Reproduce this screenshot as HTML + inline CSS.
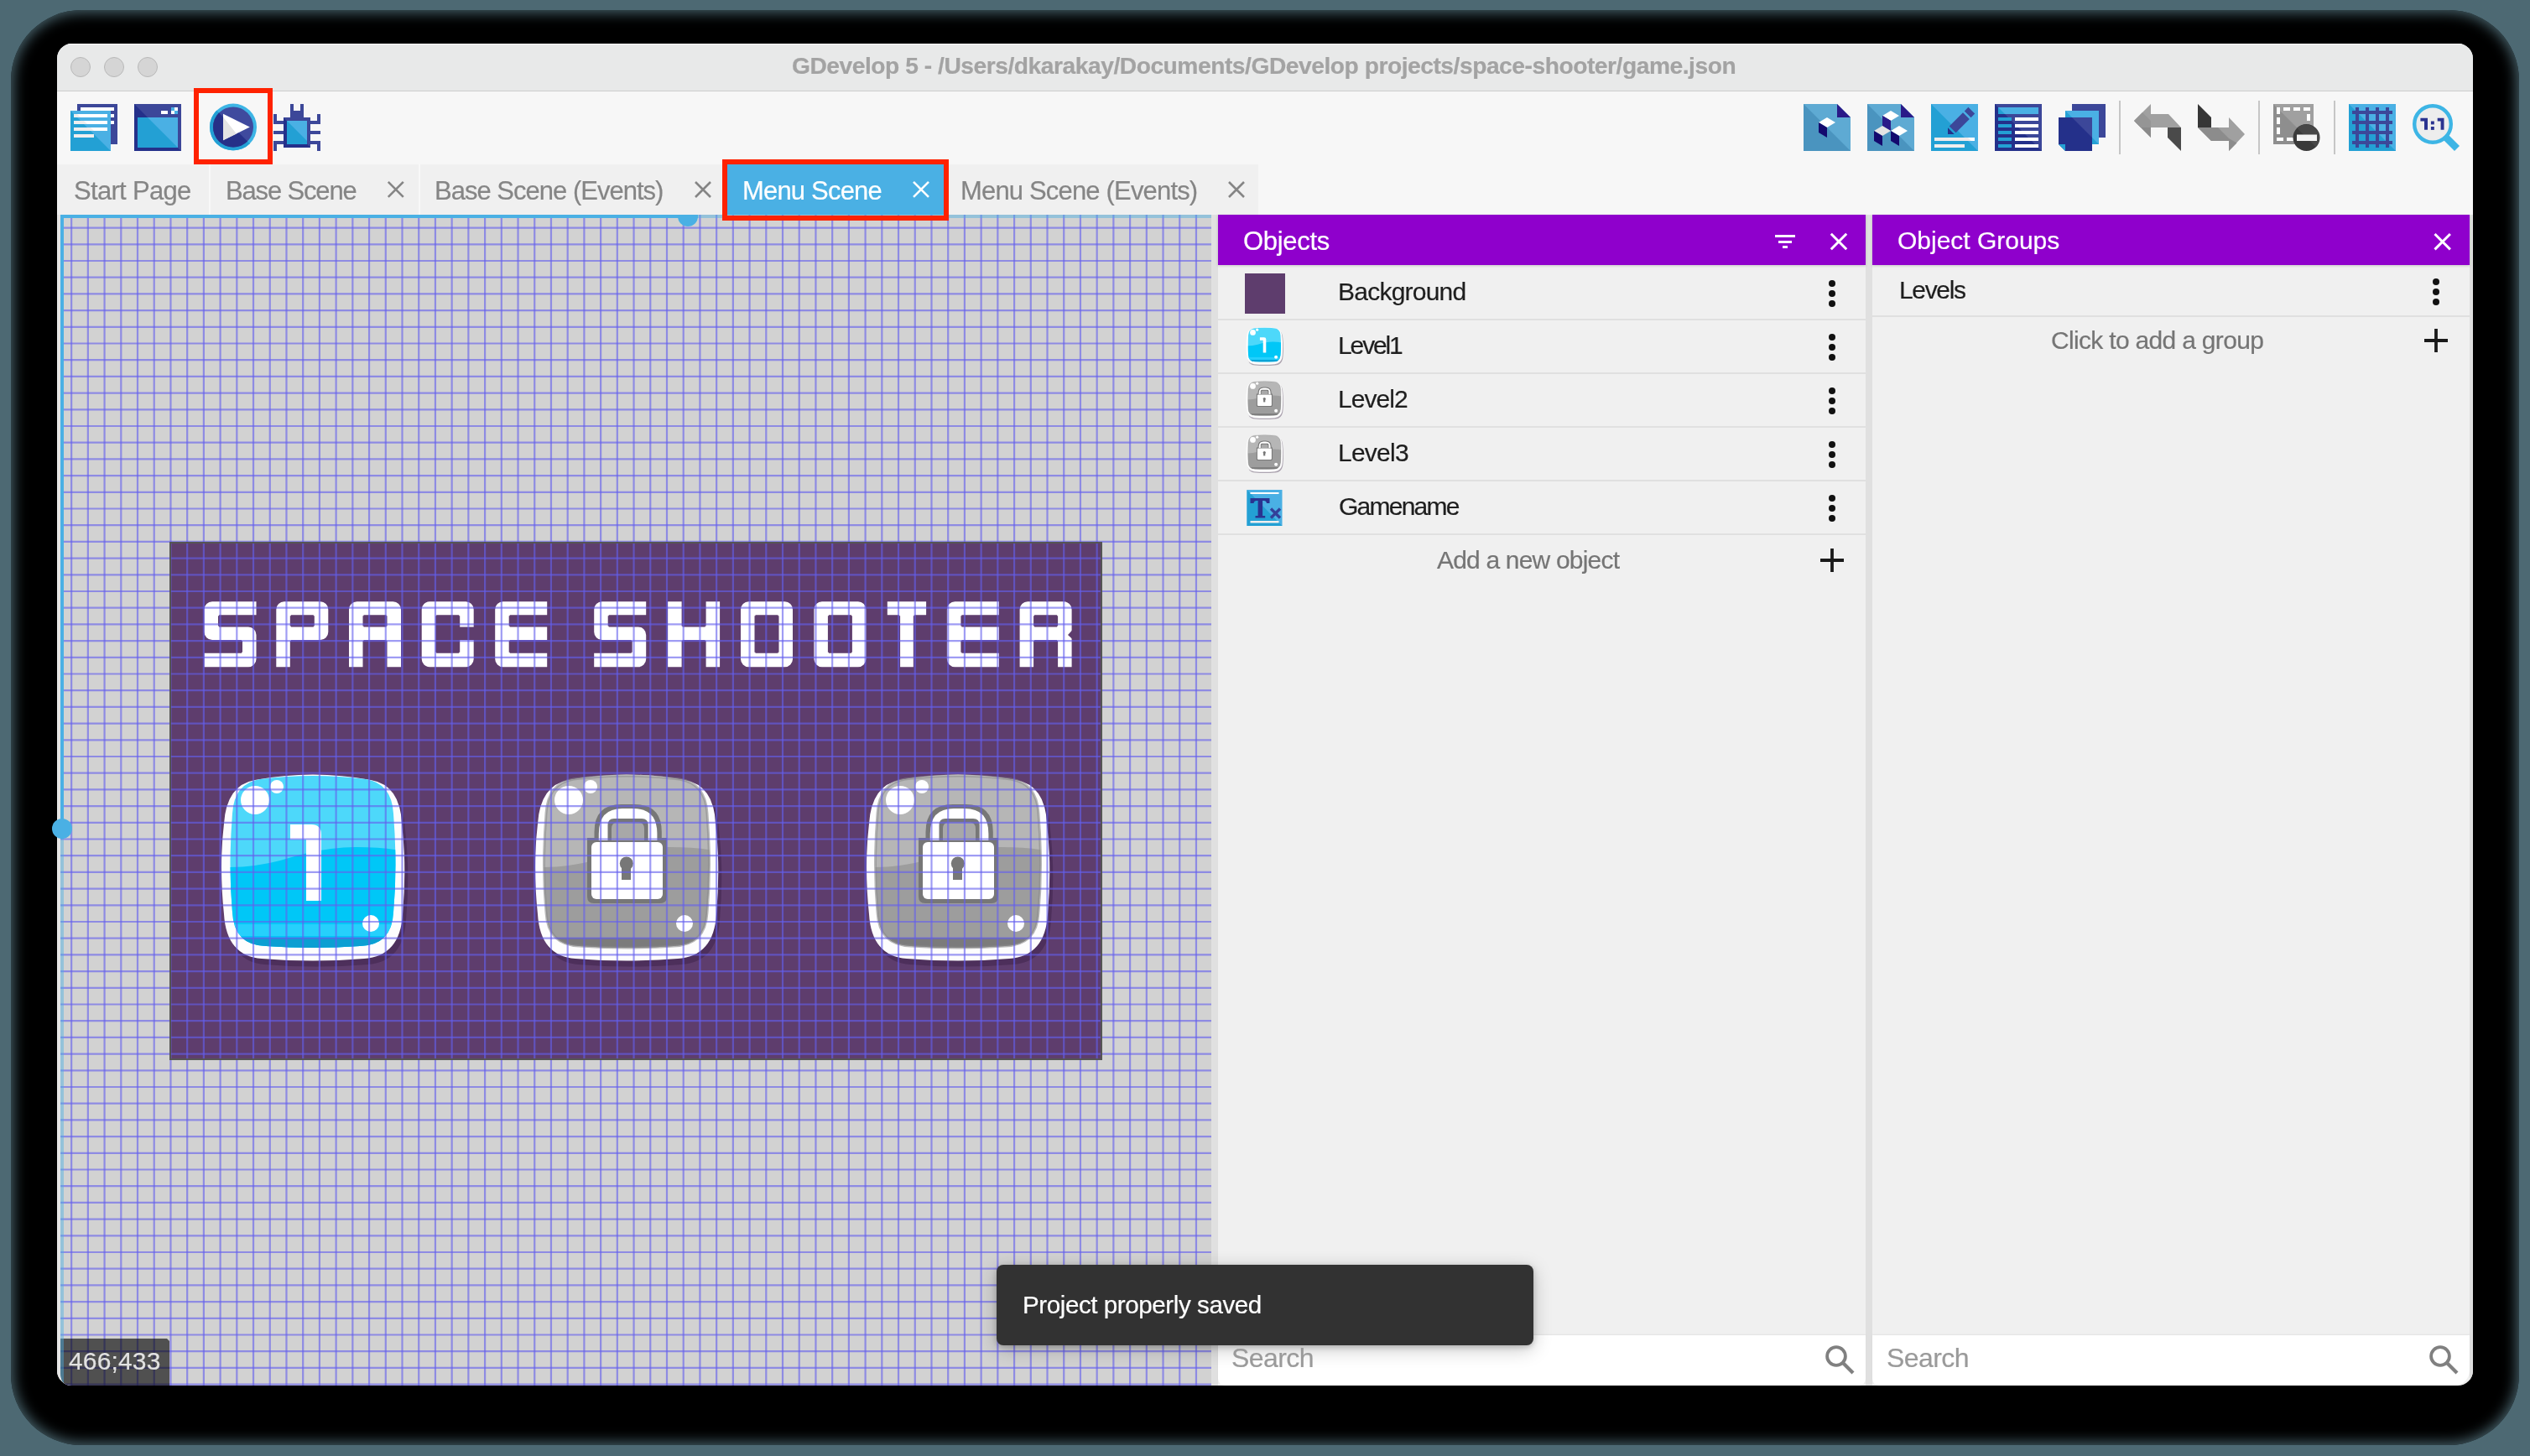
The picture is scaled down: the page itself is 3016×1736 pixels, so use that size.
<!DOCTYPE html>
<html><head><meta charset="utf-8">
<style>
*{box-sizing:border-box;margin:0;padding:0}
html,body{width:3016px;height:1736px;overflow:hidden;background:#4d6973;font-family:"Liberation Sans",sans-serif}
.a{position:absolute}
.t{position:absolute;white-space:pre;line-height:1;-webkit-font-smoothing:antialiased;will-change:transform}
svg{position:absolute;overflow:visible}
</style></head><body>
<div class="a" style="left:13px;top:12px;width:2990px;height:1711px;border-radius:84px;background:#000;box-shadow:inset 0 0 16px 3px rgba(77,105,115,0.95)"></div>
<div class="a" style="left:68px;top:52px;width:2880px;height:1600px;border-radius:18px;overflow:hidden;background:#f0f0f0">
<div class="a" style="left:0px;top:0px;width:2880px;height:56px;background:#e8e9e9;border-top:1px solid #fafafa"></div>
<div class="a" style="left:0px;top:56px;width:2880px;height:1px;background:#cdcdcd;"></div>
<div class="a" style="left:16px;top:16px;width:24px;height:24px;border-radius:50%;background:#d5d5d5;border:1px solid #b8b8b8"></div>
<div class="a" style="left:56px;top:16px;width:24px;height:24px;border-radius:50%;background:#d5d5d5;border:1px solid #b8b8b8"></div>
<div class="a" style="left:96px;top:16px;width:24px;height:24px;border-radius:50%;background:#d5d5d5;border:1px solid #b8b8b8"></div>
<div class="a" style="left:0px;top:57px;width:2880px;height:87px;background:#f7f7f7;"></div>
<div class="a" style="left:0px;top:144px;width:1432px;height:60px;background:#f0f0f0;"></div>
<div class="a" style="left:1432px;top:144px;width:1448px;height:60px;background:#f7f7f7;"></div>
<div class="a" style="left:181px;top:144px;width:2px;height:60px;background:#f8f8f8;"></div>
<div class="a" style="left:431px;top:144px;width:2px;height:60px;background:#f8f8f8;"></div>
<div class="a" style="left:0px;top:204px;width:4px;height:1396px;background:#e6e6e6;"></div>
<div class="a" style="left:1376px;top:204px;width:8px;height:1396px;background:#e0e0e0;"></div>
<div class="a" style="left:2156px;top:204px;width:8px;height:1396px;background:#e0e0e0;"></div>
<div class="a" style="left:2876px;top:204px;width:4px;height:1396px;background:#dedede;"></div>
<div class="a" style="left:799px;top:144px;width:264px;height:60px;background:#4ab0e4;"></div>
</div>
<svg class="a" style="left:0;top:0" width="3016" height="1736" viewBox="0 0 3016 1736">
<defs><clipPath id="cpCanvas"><path d="M72 256H1444V1652H86Q72 1652 72 1638Z"/></clipPath>
<clipPath id="cpIn"><path d="M46 7Q109 -1 172 7Q203 12 205 48Q210 111 205 166Q203 205 165 206Q109 210 53 206Q15 205 13 166Q8 111 13 48Q15 12 46 7Z"/></clipPath>
<g id="btnBase">
  <path d="M40 8Q109 -5 178 8Q213 14 215 60Q221 111 216 168Q213 218 170 221Q109 226 48 221Q6 218 3 168Q-3 111 3 60Q6 14 40 8Z" transform="translate(4 7)" fill="#2e1838" opacity="0.35"/>
  <path d="M40 8Q109 -5 178 8Q213 14 215 60Q221 111 216 168Q213 218 170 221Q109 226 48 221Q6 218 3 168Q-3 111 3 60Q6 14 40 8Z" fill="#fdfdfd"/>
</g>
<g id="btnBlue">
  <use href="#btnBase"/>
  <g clip-path="url(#cpIn)">
    <rect x="0" y="0" width="218" height="223" fill="#4dd8fa"/>
    <path d="M8 112Q40 112 70 104Q120 88 160 88Q190 88 212 92V215H8Z" fill="#00c7f7"/>
    <rect x="0" y="180" width="218" height="14" fill="#3fd6ff" opacity="0.6"/>
    <rect x="0" y="196" width="218" height="14" fill="#0b9fd2"/>
  </g>
  <path d="M82 61H107Q119 61 119 73V152H101V79H82Z" fill="#fff"/>
  <circle cx="40" cy="32" r="17" fill="#fff"/>
  <circle cx="66" cy="16" r="8" fill="#fff"/>
  <circle cx="178" cy="179" r="10" fill="#fff"/>
</g>
<g id="btnGray">
  <use href="#btnBase"/>
  <g clip-path="url(#cpIn)">
    <rect x="0" y="0" width="218" height="223" fill="#b6b6b6"/>
    <path d="M8 112Q40 112 70 104Q120 88 160 88Q190 88 212 92V215H8Z" fill="#9d9d9d"/>
    <rect x="0" y="196" width="218" height="14" fill="#7b7b7b"/>
  </g>
  <path d="M46 7Q109 -1 172 7Q203 12 205 48Q210 111 205 166Q203 205 165 206Q109 210 53 206Q15 205 13 166Q8 111 13 48Q15 12 46 7Z" fill="none" stroke="#8a8a8a" stroke-width="3" opacity="0.6"/>
  <path d="M70.5 155V70Q70.5 37 103 37H118Q150.8 37 150.8 70V77H157V147Q157 155 149 155H70Q62 155 62 147V77H70.5Z" fill="#777"/>
  <path d="M75.8 80V72Q75.8 42 104 42H117Q145.4 42 145.4 72V80Z" fill="#fff"/>
  <path d="M86.5 80V62Q86.5 54 94 54H127Q134.7 54 134.7 62V80Z" fill="#777"/>
  <path d="M91 80V66Q91 58.4 98 58.4H123Q130 58.4 130 66V80Z" fill="#a8a8a8"/>
  <rect x="67" y="82" width="85" height="68" rx="6" fill="#fff"/>
  <circle cx="108.8" cy="107.5" r="8" fill="#777"/>
  <rect x="103" y="108" width="11" height="19" fill="#777"/>
  <circle cx="40" cy="32" r="17" fill="#fff"/>
  <circle cx="66" cy="16" r="8" fill="#fff"/>
  <circle cx="178" cy="179" r="10" fill="#fff"/>
</g>
</defs>
<g clip-path="url(#cpCanvas)">
<rect x="72" y="256" width="1372" height="1396" fill="#d2d2d2"/>
<rect x="202" y="646" width="1112" height="618" fill="#5e3d6d"/>
<path d="M253.00 717.30H261.00V734.30H243.50V726.80A9.5 9.5 0 0 1 253.00 717.30ZM259.00 717.30H290.00V733.30H259.00V717.30ZM288.00 717.30H305.50V733.30H288.00V717.30ZM243.50 732.30H260.00V748.50H243.50V732.30ZM243.50 746.50H261.00V763.10H253.00A9.5 9.5 0 0 1 243.50 753.60V746.50ZM259.00 747.50H290.00V763.10H259.00V747.50ZM288.00 747.50H296.00A9.5 9.5 0 0 1 305.50 757.00V764.10H288.00V747.50ZM289.00 762.10H305.50V779.80H289.00V762.10ZM243.50 778.80H261.00V795.30H243.50V778.80ZM259.00 778.80H290.00V795.30H259.00V778.80ZM288.00 777.80H305.50V785.80A9.5 9.5 0 0 1 296.00 795.30H288.00V777.80ZM338.80 717.30H346.80V734.30H329.30V726.80A9.5 9.5 0 0 1 338.80 717.30ZM344.80 717.30H375.80V733.30H344.80V717.30ZM373.80 717.30H381.80A9.5 9.5 0 0 1 391.30 726.80V734.30H373.80V717.30ZM329.30 732.30H345.80V748.50H329.30V732.30ZM374.80 732.30H391.30V748.50H374.80V732.30ZM329.30 746.50H346.80V764.10H329.30V746.50ZM344.80 747.50H375.80V763.10H344.80V747.50ZM373.80 746.50H391.30V753.60A9.5 9.5 0 0 1 381.80 763.10H373.80V746.50ZM329.30 762.10H345.80V779.80H329.30V762.10ZM329.30 777.80H345.80V795.30H329.30V777.80ZM425.50 717.30H433.50V734.30H416.00V726.80A9.5 9.5 0 0 1 425.50 717.30ZM431.50 717.30H462.50V733.30H431.50V717.30ZM460.50 717.30H468.50A9.5 9.5 0 0 1 478.00 726.80V734.30H460.50V717.30ZM416.00 732.30H432.50V748.50H416.00V732.30ZM461.50 732.30H478.00V748.50H461.50V732.30ZM416.00 746.50H433.50V764.10H416.00V746.50ZM431.50 747.50H462.50V763.10H431.50V747.50ZM460.50 746.50H478.00V764.10H460.50V746.50ZM416.00 762.10H432.50V779.80H416.00V762.10ZM461.50 762.10H478.00V779.80H461.50V762.10ZM416.00 777.80H432.50V795.30H416.00V777.80ZM461.50 777.80H478.00V795.30H461.50V777.80ZM512.20 717.30H520.20V734.30H502.70V726.80A9.5 9.5 0 0 1 512.20 717.30ZM518.20 717.30H549.20V733.30H518.20V717.30ZM547.20 717.30H555.20A9.5 9.5 0 0 1 564.70 726.80V734.30H547.20V717.30ZM502.70 732.30H519.20V748.50H502.70V732.30ZM548.20 732.30H564.70V747.50H548.20V732.30ZM502.70 746.50H519.20V764.10H502.70V746.50ZM502.70 762.10H519.20V779.80H502.70V762.10ZM548.20 763.10H564.70V779.80H548.20V763.10ZM502.70 777.80H520.20V795.30H512.20A9.5 9.5 0 0 1 502.70 785.80V777.80ZM518.20 778.80H549.20V795.30H518.20V778.80ZM547.20 777.80H564.70V785.80A9.5 9.5 0 0 1 555.20 795.30H547.20V777.80ZM599.70 717.30H607.70V734.30H590.20V726.80A9.5 9.5 0 0 1 599.70 717.30ZM605.70 717.30H636.70V733.30H605.70V717.30ZM634.70 717.30H652.20V733.30H634.70V717.30ZM590.20 732.30H606.70V748.50H590.20V732.30ZM590.20 746.50H607.70V764.10H590.20V746.50ZM605.70 747.50H636.70V763.10H605.70V747.50ZM634.70 747.50H652.20V763.10H634.70V747.50ZM590.20 762.10H606.70V779.80H590.20V762.10ZM590.20 777.80H607.70V795.30H599.70A9.5 9.5 0 0 1 590.20 785.80V777.80ZM605.70 778.80H636.70V795.30H605.70V778.80ZM634.70 778.80H652.20V795.30H634.70V778.80ZM717.70 717.30H725.70V734.30H708.20V726.80A9.5 9.5 0 0 1 717.70 717.30ZM723.70 717.30H754.70V733.30H723.70V717.30ZM752.70 717.30H770.20V733.30H752.70V717.30ZM708.20 732.30H724.70V748.50H708.20V732.30ZM708.20 746.50H725.70V763.10H717.70A9.5 9.5 0 0 1 708.20 753.60V746.50ZM723.70 747.50H754.70V763.10H723.70V747.50ZM752.70 747.50H760.70A9.5 9.5 0 0 1 770.20 757.00V764.10H752.70V747.50ZM753.70 762.10H770.20V779.80H753.70V762.10ZM708.20 778.80H725.70V795.30H708.20V778.80ZM723.70 778.80H754.70V795.30H723.70V778.80ZM752.70 777.80H770.20V785.80A9.5 9.5 0 0 1 760.70 795.30H752.70V777.80ZM796.10 717.30H812.60V734.30H796.10V717.30ZM841.60 717.30H858.10V734.30H841.60V717.30ZM796.10 732.30H812.60V748.50H796.10V732.30ZM841.60 732.30H858.10V748.50H841.60V732.30ZM796.10 746.50H813.60V764.10H796.10V746.50ZM811.60 747.50H842.60V763.10H811.60V747.50ZM840.60 746.50H858.10V764.10H840.60V746.50ZM796.10 762.10H812.60V779.80H796.10V762.10ZM841.60 762.10H858.10V779.80H841.60V762.10ZM796.10 777.80H812.60V795.30H796.10V777.80ZM841.60 777.80H858.10V795.30H841.60V777.80ZM892.50 717.30H900.50V734.30H883.00V726.80A9.5 9.5 0 0 1 892.50 717.30ZM898.50 717.30H929.50V733.30H898.50V717.30ZM927.50 717.30H935.50A9.5 9.5 0 0 1 945.00 726.80V734.30H927.50V717.30ZM883.00 732.30H899.50V748.50H883.00V732.30ZM928.50 732.30H945.00V748.50H928.50V732.30ZM883.00 746.50H899.50V764.10H883.00V746.50ZM928.50 746.50H945.00V764.10H928.50V746.50ZM883.00 762.10H899.50V779.80H883.00V762.10ZM928.50 762.10H945.00V779.80H928.50V762.10ZM883.00 777.80H900.50V795.30H892.50A9.5 9.5 0 0 1 883.00 785.80V777.80ZM898.50 778.80H929.50V795.30H898.50V778.80ZM927.50 777.80H945.00V785.80A9.5 9.5 0 0 1 935.50 795.30H927.50V777.80ZM979.90 717.30H987.90V734.30H970.40V726.80A9.5 9.5 0 0 1 979.90 717.30ZM985.90 717.30H1016.90V733.30H985.90V717.30ZM1014.90 717.30H1022.90A9.5 9.5 0 0 1 1032.40 726.80V734.30H1014.90V717.30ZM970.40 732.30H986.90V748.50H970.40V732.30ZM1015.90 732.30H1032.40V748.50H1015.90V732.30ZM970.40 746.50H986.90V764.10H970.40V746.50ZM1015.90 746.50H1032.40V764.10H1015.90V746.50ZM970.40 762.10H986.90V779.80H970.40V762.10ZM1015.90 762.10H1032.40V779.80H1015.90V762.10ZM970.40 777.80H987.90V795.30H979.90A9.5 9.5 0 0 1 970.40 785.80V777.80ZM985.90 778.80H1016.90V795.30H985.90V778.80ZM1014.90 777.80H1032.40V785.80A9.5 9.5 0 0 1 1022.90 795.30H1014.90V777.80ZM1138.40 717.30H1146.40V734.30H1128.90V726.80A9.5 9.5 0 0 1 1138.40 717.30ZM1144.40 717.30H1175.40V733.30H1144.40V717.30ZM1173.40 717.30H1190.90V733.30H1173.40V717.30ZM1128.90 732.30H1145.40V748.50H1128.90V732.30ZM1128.90 746.50H1146.40V764.10H1128.90V746.50ZM1144.40 747.50H1175.40V763.10H1144.40V747.50ZM1173.40 747.50H1190.90V763.10H1173.40V747.50ZM1128.90 762.10H1145.40V779.80H1128.90V762.10ZM1128.90 777.80H1146.40V795.30H1138.40A9.5 9.5 0 0 1 1128.90 785.80V777.80ZM1144.40 778.80H1175.40V795.30H1144.40V778.80ZM1173.40 778.80H1190.90V795.30H1173.40V778.80ZM1225.10 717.30H1233.10V734.30H1215.60V726.80A9.5 9.5 0 0 1 1225.10 717.30ZM1231.10 717.30H1262.10V733.30H1231.10V717.30ZM1260.10 717.30H1268.10A9.5 9.5 0 0 1 1277.60 726.80V734.30H1260.10V717.30ZM1215.60 732.30H1232.10V748.50H1215.60V732.30ZM1261.10 732.30H1277.60V748.50H1261.10V732.30ZM1215.60 746.50H1233.10V764.10H1215.60V746.50ZM1231.10 747.50H1262.10V763.10H1231.10V747.50ZM1260.10 746.50H1277.60V764.10H1260.10V746.50ZM1215.60 762.10H1232.10V779.80H1215.60V762.10ZM1261.10 762.10H1277.60V779.80H1261.10V762.10ZM1215.60 777.80H1232.10V795.30H1215.60V777.80ZM1261.10 777.80H1277.60V795.30H1261.10V777.80ZM1057.80 717.30H1074.10V733.30H1057.80V717.30ZM1072.10 717.30H1089.80V734.30H1072.10V717.30ZM1087.80 717.30H1104.10V733.30H1087.80V717.30ZM1073.10 732.30H1088.80V748.50H1073.10V732.30ZM1073.10 746.50H1088.80V764.10H1073.10V746.50ZM1073.10 762.10H1088.80V779.80H1073.10V762.10ZM1073.10 777.80H1088.80V795.30H1073.10V777.80Z" fill="#fff"/>
<path d="M1279.5 750L1273 757L1279.5 763Z" fill="#5e3d6d"/>
<use href="#btnBlue" transform="translate(264 922)"/>
<use href="#btnGray" transform="translate(638 922)"/>
<use href="#btnGray" transform="translate(1033 922)"/>
<path d="M84.04 256h2.2v1396h-2.2zM103.76 256h2.2v1396h-2.2zM123.48 256h2.2v1396h-2.2zM143.19 256h2.2v1396h-2.2zM162.91 256h2.2v1396h-2.2zM182.63 256h2.2v1396h-2.2zM202.35 256h2.2v1396h-2.2zM222.07 256h2.2v1396h-2.2zM241.78 256h2.2v1396h-2.2zM261.50 256h2.2v1396h-2.2zM281.22 256h2.2v1396h-2.2zM300.94 256h2.2v1396h-2.2zM320.66 256h2.2v1396h-2.2zM340.37 256h2.2v1396h-2.2zM360.09 256h2.2v1396h-2.2zM379.81 256h2.2v1396h-2.2zM399.53 256h2.2v1396h-2.2zM419.25 256h2.2v1396h-2.2zM438.96 256h2.2v1396h-2.2zM458.68 256h2.2v1396h-2.2zM478.40 256h2.2v1396h-2.2zM498.12 256h2.2v1396h-2.2zM517.84 256h2.2v1396h-2.2zM537.55 256h2.2v1396h-2.2zM557.27 256h2.2v1396h-2.2zM576.99 256h2.2v1396h-2.2zM596.71 256h2.2v1396h-2.2zM616.43 256h2.2v1396h-2.2zM636.14 256h2.2v1396h-2.2zM655.86 256h2.2v1396h-2.2zM675.58 256h2.2v1396h-2.2zM695.30 256h2.2v1396h-2.2zM715.02 256h2.2v1396h-2.2zM734.73 256h2.2v1396h-2.2zM754.45 256h2.2v1396h-2.2zM774.17 256h2.2v1396h-2.2zM793.89 256h2.2v1396h-2.2zM813.61 256h2.2v1396h-2.2zM833.32 256h2.2v1396h-2.2zM853.04 256h2.2v1396h-2.2zM872.76 256h2.2v1396h-2.2zM892.48 256h2.2v1396h-2.2zM912.20 256h2.2v1396h-2.2zM931.91 256h2.2v1396h-2.2zM951.63 256h2.2v1396h-2.2zM971.35 256h2.2v1396h-2.2zM991.07 256h2.2v1396h-2.2zM1010.79 256h2.2v1396h-2.2zM1030.50 256h2.2v1396h-2.2zM1050.22 256h2.2v1396h-2.2zM1069.94 256h2.2v1396h-2.2zM1089.66 256h2.2v1396h-2.2zM1109.38 256h2.2v1396h-2.2zM1129.09 256h2.2v1396h-2.2zM1148.81 256h2.2v1396h-2.2zM1168.53 256h2.2v1396h-2.2zM1188.25 256h2.2v1396h-2.2zM1207.97 256h2.2v1396h-2.2zM1227.68 256h2.2v1396h-2.2zM1247.40 256h2.2v1396h-2.2zM1267.12 256h2.2v1396h-2.2zM1286.84 256h2.2v1396h-2.2zM1306.56 256h2.2v1396h-2.2zM1326.27 256h2.2v1396h-2.2zM1345.99 256h2.2v1396h-2.2zM1365.71 256h2.2v1396h-2.2zM1385.43 256h2.2v1396h-2.2zM1405.15 256h2.2v1396h-2.2zM1424.86 256h2.2v1396h-2.2z" fill="rgb(100,96,238)" fill-opacity="0.62"/>
<path d="M72 270.48h1372v2.2h-1372zM72 290.18h1372v2.2h-1372zM72 309.88h1372v2.2h-1372zM72 329.58h1372v2.2h-1372zM72 349.28h1372v2.2h-1372zM72 368.98h1372v2.2h-1372zM72 388.68h1372v2.2h-1372zM72 408.38h1372v2.2h-1372zM72 428.08h1372v2.2h-1372zM72 447.78h1372v2.2h-1372zM72 467.48h1372v2.2h-1372zM72 487.18h1372v2.2h-1372zM72 506.88h1372v2.2h-1372zM72 526.58h1372v2.2h-1372zM72 546.28h1372v2.2h-1372zM72 565.98h1372v2.2h-1372zM72 585.68h1372v2.2h-1372zM72 605.38h1372v2.2h-1372zM72 625.08h1372v2.2h-1372zM72 644.78h1372v2.2h-1372zM72 664.48h1372v2.2h-1372zM72 684.18h1372v2.2h-1372zM72 703.88h1372v2.2h-1372zM72 723.58h1372v2.2h-1372zM72 743.28h1372v2.2h-1372zM72 762.98h1372v2.2h-1372zM72 782.68h1372v2.2h-1372zM72 802.38h1372v2.2h-1372zM72 822.08h1372v2.2h-1372zM72 841.78h1372v2.2h-1372zM72 861.48h1372v2.2h-1372zM72 881.18h1372v2.2h-1372zM72 900.88h1372v2.2h-1372zM72 920.58h1372v2.2h-1372zM72 940.28h1372v2.2h-1372zM72 959.98h1372v2.2h-1372zM72 979.68h1372v2.2h-1372zM72 999.38h1372v2.2h-1372zM72 1019.08h1372v2.2h-1372zM72 1038.78h1372v2.2h-1372zM72 1058.48h1372v2.2h-1372zM72 1078.18h1372v2.2h-1372zM72 1097.88h1372v2.2h-1372zM72 1117.58h1372v2.2h-1372zM72 1137.28h1372v2.2h-1372zM72 1156.98h1372v2.2h-1372zM72 1176.68h1372v2.2h-1372zM72 1196.38h1372v2.2h-1372zM72 1216.08h1372v2.2h-1372zM72 1235.78h1372v2.2h-1372zM72 1255.48h1372v2.2h-1372zM72 1275.18h1372v2.2h-1372zM72 1294.88h1372v2.2h-1372zM72 1314.58h1372v2.2h-1372zM72 1334.28h1372v2.2h-1372zM72 1353.98h1372v2.2h-1372zM72 1373.68h1372v2.2h-1372zM72 1393.38h1372v2.2h-1372zM72 1413.08h1372v2.2h-1372zM72 1432.78h1372v2.2h-1372zM72 1452.48h1372v2.2h-1372zM72 1472.18h1372v2.2h-1372zM72 1491.88h1372v2.2h-1372zM72 1511.58h1372v2.2h-1372zM72 1531.28h1372v2.2h-1372zM72 1550.98h1372v2.2h-1372zM72 1570.68h1372v2.2h-1372zM72 1590.38h1372v2.2h-1372zM72 1610.08h1372v2.2h-1372zM72 1629.78h1372v2.2h-1372zM72 1649.48h1372v2.2h-1372z" fill="rgb(100,96,238)" fill-opacity="0.62"/>
<rect x="203" y="647" width="1110" height="616" fill="none" stroke="#555" stroke-width="2"/>
<path d="M72 1596H199L202 1599V1652H86Q72 1652 72 1638Z" fill="#000" fill-opacity="0.62"/>
<rect x="72" y="256" width="1372" height="4" fill="#4ab0e4" fill-opacity="0.45"/>
<rect x="72" y="256" width="4" height="1396" fill="#4ab0e4" fill-opacity="0.45"/>
<rect x="72" y="256" width="760" height="4" fill="#4ab0e4"/>
<rect x="72" y="256" width="4" height="744" fill="#4ab0e4"/>
<circle cx="820" cy="258" r="12" fill="#4ab0e4"/>
</g>
<circle cx="74" cy="988" r="12" fill="#4ab0e4"/>
</svg>
<div class="a" style="left:1452px;top:256px;width:772px;height:60px;background:#8f00cc;box-shadow:0 1px 3px rgba(0,0,0,0.18)"></div>
<div class="a" style="left:2232px;top:256px;width:712px;height:60px;background:#8f00cc;box-shadow:0 1px 3px rgba(0,0,0,0.18)"></div>
<div class="a" style="left:1452px;top:380px;width:772px;height:2px;background:#e0e0e0;"></div>
<div class="a" style="left:1452px;top:444px;width:772px;height:2px;background:#e0e0e0;"></div>
<div class="a" style="left:1452px;top:508px;width:772px;height:2px;background:#e0e0e0;"></div>
<div class="a" style="left:1452px;top:572px;width:772px;height:2px;background:#e0e0e0;"></div>
<div class="a" style="left:1452px;top:636px;width:772px;height:2px;background:#e0e0e0;"></div>
<div class="a" style="left:2232px;top:376px;width:712px;height:2px;background:#e0e0e0;"></div>
<div class="a" style="left:1452px;top:1592px;width:772px;height:60px;background:#fff;border-radius:0 0 8px 8px;box-shadow:0 -1px 2px rgba(0,0,0,0.06)"></div>
<div class="a" style="left:2232px;top:1592px;width:712px;height:60px;background:#fff;border-radius:0 0 18px 8px;box-shadow:0 -1px 2px rgba(0,0,0,0.06)"></div>
<div class="a" style="left:1484px;top:326px;width:48px;height:48px;background:#5e3d6d;"></div>
<svg class="a" style="left:0;top:0" width="3016" height="1736" viewBox="0 0 3016 1736">
<g transform="translate(84 124)"><rect x="8" y="0" width="48" height="48" fill="#3c4799"/>
<rect x="12" y="4" width="40" height="4" fill="#fff"/>
<rect x="46" y="12" width="6" height="4" fill="#fff"/><rect x="46" y="20" width="6" height="4" fill="#fff"/>
<rect x="0" y="8" width="48" height="48" fill="#4ab0e4"/>
<path d="M0 8L48 56H0Z" fill="#23a0d4"/>
<rect x="4" y="12" width="40" height="4" fill="#fff"/><rect x="4" y="20" width="40" height="4" fill="#fff"/>
<rect x="4" y="28" width="40" height="4" fill="#fff"/><rect x="4" y="36" width="24" height="4" fill="#f0eeee"/>
<path d="M4 12H8L12 16H4ZM4 20H16L20 24H4ZM4 28H24L28 32H4Z" fill="#eeeeee"/></g>
<g transform="translate(160 124)"><rect width="56" height="56" fill="#3c4799"/><path d="M0 0L56 56H0Z" fill="#24308a"/>
<rect x="4" y="16" width="48" height="36" fill="#4ab0e4"/><path d="M4 16H16L52 52H4Z" fill="#23a0d4"/>
<rect x="32" y="8" width="8" height="4" fill="#fff"/>
<rect x="44" y="4" width="4" height="4" fill="#4ab0e4"/><rect x="48" y="4" width="4" height="4" fill="#fff"/>
<rect x="44" y="8" width="4" height="4" fill="#fff"/><rect x="48" y="8" width="4" height="4" fill="#4ab0e4"/></g>
<g transform="translate(250 123.5)"><defs><clipPath id="cpPlayLL"><path d="M0 0L56 56H0Z"/></clipPath></defs>
<circle cx="28" cy="28" r="28" fill="#3db5e5"/><circle cx="28" cy="28" r="28" fill="#23a0d4" clip-path="url(#cpPlayLL)"/>
<circle cx="28" cy="28" r="24" fill="#3f4a9e"/><circle cx="28" cy="28" r="24" fill="#263088" clip-path="url(#cpPlayLL)"/>
<path d="M16 12.2L47.8 28L16 43.8Z" fill="#fff"/><path d="M16 12.2L16 43.8L31.9 35.9L16 16Z" fill="#e4e4e4"/></g>
<g transform="translate(326 124)"><g fill="#3c4799"><rect x="20" y="0" width="4" height="16"/><rect x="32" y="0" width="4" height="16"/><rect x="20" y="8" width="16" height="8"/><rect x="0" y="12" width="4" height="12"/><rect x="0" y="20" width="14" height="4"/><rect x="0" y="32" width="14" height="4"/><rect x="0" y="44" width="14" height="4"/><rect x="0" y="44" width="4" height="12"/><rect x="52" y="12" width="4" height="12"/><rect x="42" y="20" width="14" height="4"/><rect x="42" y="32" width="14" height="4"/><rect x="42" y="44" width="14" height="4"/><rect x="52" y="44" width="4" height="12"/><rect x="12" y="16" width="32" height="36"/></g>
<path d="M12 16L44 52H12Z" fill="#24308a"/>
<rect x="16" y="20" width="24" height="28" fill="#4ab0e4"/><path d="M16 20L40 44V48H16Z" fill="#23a0d4"/></g>
<g transform="translate(2150 124)"><path d="M0 0H40L56 16V56H0Z" fill="#5eaad3"/><path d="M0 0L56 56H0Z" fill="#4a94bf"/><path d="M40 0L56 16H40Z" fill="#2a1a88"/><path d="M18 22L28 16L38 22L28 28Z" fill="#fff"/><path d="M18 22L28 28V40L18 34Z" fill="#140a6e"/></g>
<g transform="translate(2226 124)"><path d="M0 0H40L56 16V56H0Z" fill="#5eaad3"/><path d="M0 0L56 56H0Z" fill="#4a94bf"/><path d="M40 0L56 16H40Z" fill="#2a1a88"/><path d="M18 14L28 8L38 14L28 20Z" fill="#fff"/><path d="M18 14L28 20V32L18 26Z" fill="#140a6e"/><path d="M18 14L28 20V32L18 26Z" fill="#2a1a88"/><path d="M8 32L18 26L28 32L18 38Z" fill="#e4e4e4"/><path d="M8 32L18 38V50L8 44Z" fill="#140a6e"/><path d="M28 32L38 26L48 32L38 38Z" fill="#fff"/><path d="M28 32L38 38V50L28 44Z" fill="#140a6e"/></g>
<g transform="translate(2302 124)"><rect width="56" height="56" fill="#4ab0e4"/><path d="M0 0L56 56H0Z" fill="#23a0d4"/>
<g transform="translate(20 36) rotate(-45)" fill="#3c4799"><path d="M0 0L5.5 -5.5V5.5Z" fill="#24308a"/><rect x="8" y="-5.5" width="23" height="11"/><rect x="33.5" y="-5.5" width="6.5" height="11"/></g>
<rect x="4" y="40" width="48" height="4" fill="#fff"/><rect x="4" y="48" width="36" height="4" fill="#f0eeee"/>
<path d="M4 40H44L48 44H4Z" fill="#efebeb"/></g>
<g transform="translate(2378 124)"><rect width="56" height="56" fill="#3c4799"/><path d="M0 0L56 56H0Z" fill="#24308a"/>
<rect x="4" y="4" width="48" height="8" fill="#4ab0e4"/><path d="M4 4L12 12H4Z" fill="#23a0d4"/><rect x="4" y="16" width="16" height="4" fill="#23a0d4"/><rect x="24" y="16" width="28" height="4" fill="#fff"/><rect x="4" y="24" width="16" height="4" fill="#23a0d4"/><rect x="24" y="24" width="28" height="4" fill="#fff"/><rect x="4" y="32" width="16" height="4" fill="#23a0d4"/><rect x="24" y="32" width="28" height="4" fill="#fff"/><rect x="4" y="40" width="16" height="4" fill="#23a0d4"/><rect x="24" y="40" width="28" height="4" fill="#fff"/><rect x="4" y="48" width="16" height="4" fill="#23a0d4"/><rect x="24" y="48" width="28" height="4" fill="#fff"/></g>
<g transform="translate(2454 124)"><rect x="16" y="0" width="40" height="40" fill="#3c4799"/>
<rect x="8" y="8" width="40" height="40" fill="#4ab0e4"/><path d="M8 8L48 48H8Z" fill="#23a0d4"/>
<path d="M0 16H40V56H8L0 48Z" fill="#24308a"/><path d="M16 16H40V40Z" fill="#3c4799"/>
<path d="M0 48H8V56Z" fill="#23a0d4"/></g>
<rect x="2526" y="120" width="2" height="64" fill="#c6c6c6"/>
<g transform="translate(2544 124)"><path d="M0 20L20 0V12H41L56 28H20V40Z" fill="#a0a0a0"/>
<path d="M0 20L20 40V28H12Z" fill="#8a8a8a"/><path d="M0 20L10 10L20 20V28H8Z" fill="#959595"/>
<path d="M40 28H56V56L40 40Z" fill="#4a4a4a"/></g>
<g transform="translate(2620 124)"><path d="M0 0L16 16V28H0Z" fill="#363636"/>
<path d="M0 28H37V16L56 36L37 56V44H16Z" fill="#a0a0a0"/>
<path d="M0 28H24L37 41V44H16Z" fill="#8c8c8c"/><path d="M37 41L46.5 46.5L37 56Z" fill="#8c8c8c"/></g>
<rect x="2692" y="120" width="2" height="64" fill="#c6c6c6"/>
<g transform="translate(2710 124)"><rect width="48" height="48" fill="#a0a0a0"/><path d="M0 0L48 48H0Z" fill="#8e8e8e"/>
<g fill="#fff"><rect x="4" y="4" width="4" height="8"/><rect x="12" y="4" width="8" height="4"/><rect x="24" y="4" width="8" height="4"/><rect x="36" y="4" width="8" height="4"/><rect x="40" y="12" width="4" height="8"/><rect x="4" y="16" width="4" height="8"/><rect x="4" y="28" width="4" height="8"/><rect x="4" y="40" width="8" height="4"/><rect x="16" y="40" width="8" height="4"/></g>
<circle cx="39.5" cy="40" r="16" fill="#3a3a3a"/><path d="M28.2 28.7A16 16 0 0 1 50.8 51.3Z" fill="#474747"/>
<rect x="28" y="36.5" width="24" height="7.5" fill="#f4f4f4"/></g>
<rect x="2782" y="120" width="2" height="64" fill="#c6c6c6"/>
<g transform="translate(2800 124)"><rect width="56" height="56" fill="#4ab0e4"/><path d="M0 0L56 56H0Z" fill="#23a0d4"/>
<g fill="#3c4799"><rect x="8" y="4" width="4" height="48"/><rect x="4" y="8" width="48" height="4"/><rect x="20" y="4" width="4" height="48"/><rect x="4" y="20" width="48" height="4"/><rect x="32" y="4" width="4" height="48"/><rect x="4" y="32" width="48" height="4"/><rect x="44" y="4" width="4" height="48"/><rect x="4" y="44" width="48" height="4"/></g></g>
<g transform="translate(2876 124)"><path d="M36 42L42 36L56 50L50 56Z" fill="#3db5e5"/>
<circle cx="24" cy="24" r="21.8" fill="#ededed" stroke="#3db5e5" stroke-width="4.4"/>
<path d="M12 38A17 17 0 0 0 36 12Z" fill="#e6e6e6" opacity="0"/>
<g fill="#2a3390"><path d="M9.4 16.7H18V30.8H14V20.6H9.4Z"/><rect x="21.9" y="20.5" width="3.9" height="3.9"/><rect x="21.9" y="27" width="3.9" height="3.9"/><path d="M29.7 16.7H37.5V30.8H33.6V20.6H29.7Z"/></g></g>
<path d="M462.8 216.8L480.8 234.8M480.8 216.8L462.8 234.8" stroke="#858585" stroke-width="2.6" fill="none"/>
<path d="M829 217L847 235M847 217L829 235" stroke="#858585" stroke-width="2.6" fill="none"/>
<path d="M1089 216.8L1107 234.8M1107 216.8L1089 234.8" stroke="#fff" stroke-width="2.6" fill="none"/>
<path d="M1465 217L1483 235M1483 217L1465 235" stroke="#858585" stroke-width="2.6" fill="none"/>
<rect x="2116" y="280" width="24" height="3" fill="#fff"/><rect x="2120" y="287" width="16" height="3" fill="#fff"/><rect x="2125" y="293" width="6" height="3" fill="#fff"/>
<path d="M2182.8 278.8L2201.2 297.2M2201.2 278.8L2182.8 297.2" stroke="#fff" stroke-width="3" fill="none"/>
<path d="M2902.5 279.0L2920.8999999999996 297.4M2920.8999999999996 279.0L2902.5 297.4" stroke="#fff" stroke-width="3" fill="none"/>
<circle cx="2184" cy="338" r="4" fill="#111"/><circle cx="2184" cy="350" r="4" fill="#111"/><circle cx="2184" cy="362" r="4" fill="#111"/>
<circle cx="2184" cy="402" r="4" fill="#111"/><circle cx="2184" cy="414" r="4" fill="#111"/><circle cx="2184" cy="426" r="4" fill="#111"/>
<circle cx="2184" cy="466" r="4" fill="#111"/><circle cx="2184" cy="478" r="4" fill="#111"/><circle cx="2184" cy="490" r="4" fill="#111"/>
<circle cx="2184" cy="530" r="4" fill="#111"/><circle cx="2184" cy="542" r="4" fill="#111"/><circle cx="2184" cy="554" r="4" fill="#111"/>
<circle cx="2184" cy="594" r="4" fill="#111"/><circle cx="2184" cy="606" r="4" fill="#111"/><circle cx="2184" cy="618" r="4" fill="#111"/>
<circle cx="2904" cy="336" r="4" fill="#111"/><circle cx="2904" cy="348" r="4" fill="#111"/><circle cx="2904" cy="360" r="4" fill="#111"/>
<path d="M2170 668H2198M2184 654V682" stroke="#1a1a1a" stroke-width="3.8" fill="none"/>
<path d="M2890 406H2918M2904 392V420" stroke="#1a1a1a" stroke-width="3.8" fill="none"/>
<circle cx="2189" cy="1617" r="10.9" fill="none" stroke="#808080" stroke-width="3.8"/><path d="M2196.5 1624.5L2209 1637" stroke="#808080" stroke-width="4.2"/>
<circle cx="2909" cy="1617" r="10.9" fill="none" stroke="#808080" stroke-width="3.8"/><path d="M2916.5 1624.5L2929 1637" stroke="#808080" stroke-width="4.2"/>
<use href="#btnBlue" transform="translate(1485.5 390) scale(0.2)"/>
<use href="#btnGray" transform="translate(1485.5 454) scale(0.2)"/>
<use href="#btnGray" transform="translate(1485.5 518) scale(0.2)"/>
<g transform="translate(1486.5 584)"><rect width="42" height="43" fill="#4ab0e4"/><path d="M0 0L42 43H0Z" fill="#23a0d4"/>
<rect x="4" y="3" width="34" height="2" fill="#fff"/><rect x="4" y="37" width="34" height="2.5" fill="#eee"/>
<path d="M4 10H27V16H23.5Q23 13 20 13H18.6V31H21.7V33.6H10V31H13.1V13H11.5Q8.5 13 8 16H4Z" fill="#2a3390"/>
<path d="M28.5 22.5L39.5 33.5M39.5 22.5L28.5 33.5" stroke="#33409a" stroke-width="3.4"/></g>
</svg>
<div class="a" style="left:1188px;top:1508px;width:640px;height:96px;background:#323232;border-radius:8px;box-shadow:0 5px 22px rgba(0,0,0,0.22),0 2px 6px rgba(0,0,0,0.2)"></div>
<div class="t" style="left:943.7px;top:64.3px;font-size:28.2px;color:#a3a3a3;font-weight:bold;letter-spacing:-0.465px;-webkit-text-stroke:0.2px #a3a3a3">GDevelop 5 - /Users/dkarakay/Documents/GDevelop projects/space-shooter/game.json</div>
<div class="t" style="left:88.1px;top:212.1px;font-size:31.0px;color:#858585;font-weight:normal;letter-spacing:-0.689px;-webkit-text-stroke:0.2px #858585">Start Page</div>
<div class="t" style="left:268.9px;top:212.1px;font-size:31.0px;color:#858585;font-weight:normal;letter-spacing:-1.156px;-webkit-text-stroke:0.2px #858585">Base Scene</div>
<div class="t" style="left:518.3px;top:212.1px;font-size:31.0px;color:#858585;font-weight:normal;letter-spacing:-0.989px;-webkit-text-stroke:0.2px #858585">Base Scene (Events)</div>
<div class="t" style="left:885.3px;top:212.2px;font-size:31.0px;color:#ffffff;font-weight:normal;letter-spacing:-0.811px;-webkit-text-stroke:0.2px #ffffff">Menu Scene</div>
<div class="t" style="left:1144.6px;top:212.2px;font-size:31.0px;color:#858585;font-weight:normal;letter-spacing:-0.828px;-webkit-text-stroke:0.2px #858585">Menu Scene (Events)</div>
<div class="t" style="left:1482.0px;top:272.1px;font-size:31.0px;color:#ffffff;font-weight:normal;letter-spacing:-0.3px;-webkit-text-stroke:0.2px #ffffff">Objects</div>
<div class="t" style="left:2261.8px;top:272.0px;font-size:30.0px;color:#ffffff;font-weight:normal;letter-spacing:-0.017px;-webkit-text-stroke:0.2px #ffffff">Object Groups</div>
<div class="t" style="left:1595.3px;top:332.6px;font-size:30.0px;color:#1e1e1e;font-weight:normal;letter-spacing:-0.767px;-webkit-text-stroke:0.2px #1e1e1e">Background</div>
<div class="t" style="left:1595.3px;top:396.6px;font-size:30.0px;color:#1e1e1e;font-weight:normal;letter-spacing:-2.12px;-webkit-text-stroke:0.2px #1e1e1e">Level1</div>
<div class="t" style="left:1594.8px;top:460.6px;font-size:30.0px;color:#1e1e1e;font-weight:normal;letter-spacing:-0.96px;-webkit-text-stroke:0.2px #1e1e1e">Level2</div>
<div class="t" style="left:1594.8px;top:524.6px;font-size:30.0px;color:#1e1e1e;font-weight:normal;letter-spacing:-0.76px;-webkit-text-stroke:0.2px #1e1e1e">Level3</div>
<div class="t" style="left:1595.8px;top:588.6px;font-size:30.0px;color:#1e1e1e;font-weight:normal;letter-spacing:-1.757px;-webkit-text-stroke:0.2px #1e1e1e">Gamename</div>
<div class="t" style="left:2263.9px;top:330.7px;font-size:30.0px;color:#1e1e1e;font-weight:normal;letter-spacing:-1.34px;-webkit-text-stroke:0.2px #1e1e1e">Levels</div>
<div class="t" style="left:1713.4px;top:652.9px;font-size:30.0px;color:#757575;font-weight:normal;letter-spacing:-0.813px;-webkit-text-stroke:0.2px #757575">Add a new object</div>
<div class="t" style="left:2444.7px;top:391.2px;font-size:30.0px;color:#757575;font-weight:normal;letter-spacing:-0.684px;-webkit-text-stroke:0.2px #757575">Click to add a group</div>
<div class="t" style="left:1468.2px;top:1602.9px;font-size:32.0px;color:#9a9a9a;font-weight:normal;letter-spacing:-0.58px;-webkit-text-stroke:0.2px #9a9a9a">Search</div>
<div class="t" style="left:2248.6px;top:1602.9px;font-size:32.0px;color:#9a9a9a;font-weight:normal;letter-spacing:-0.58px;-webkit-text-stroke:0.2px #9a9a9a">Search</div>
<div class="t" style="left:81.7px;top:1608.2px;font-size:30.0px;color:#e2e2e2;font-weight:normal;letter-spacing:0.15px;-webkit-text-stroke:0.2px #e2e2e2">466;433</div>
<div class="t" style="left:1219.0px;top:1540.9px;font-size:29.6px;color:#ffffff;font-weight:normal;letter-spacing:-0.438px;-webkit-text-stroke:0.2px #ffffff">Project properly saved</div>
<div class="a" style="left:231px;top:105px;width:94px;height:91px;background:transparent;border:6px solid #ff2200"></div>
<div class="a" style="left:861px;top:190px;width:270px;height:73px;background:transparent;border:6px solid #ff2200"></div>
</body></html>
